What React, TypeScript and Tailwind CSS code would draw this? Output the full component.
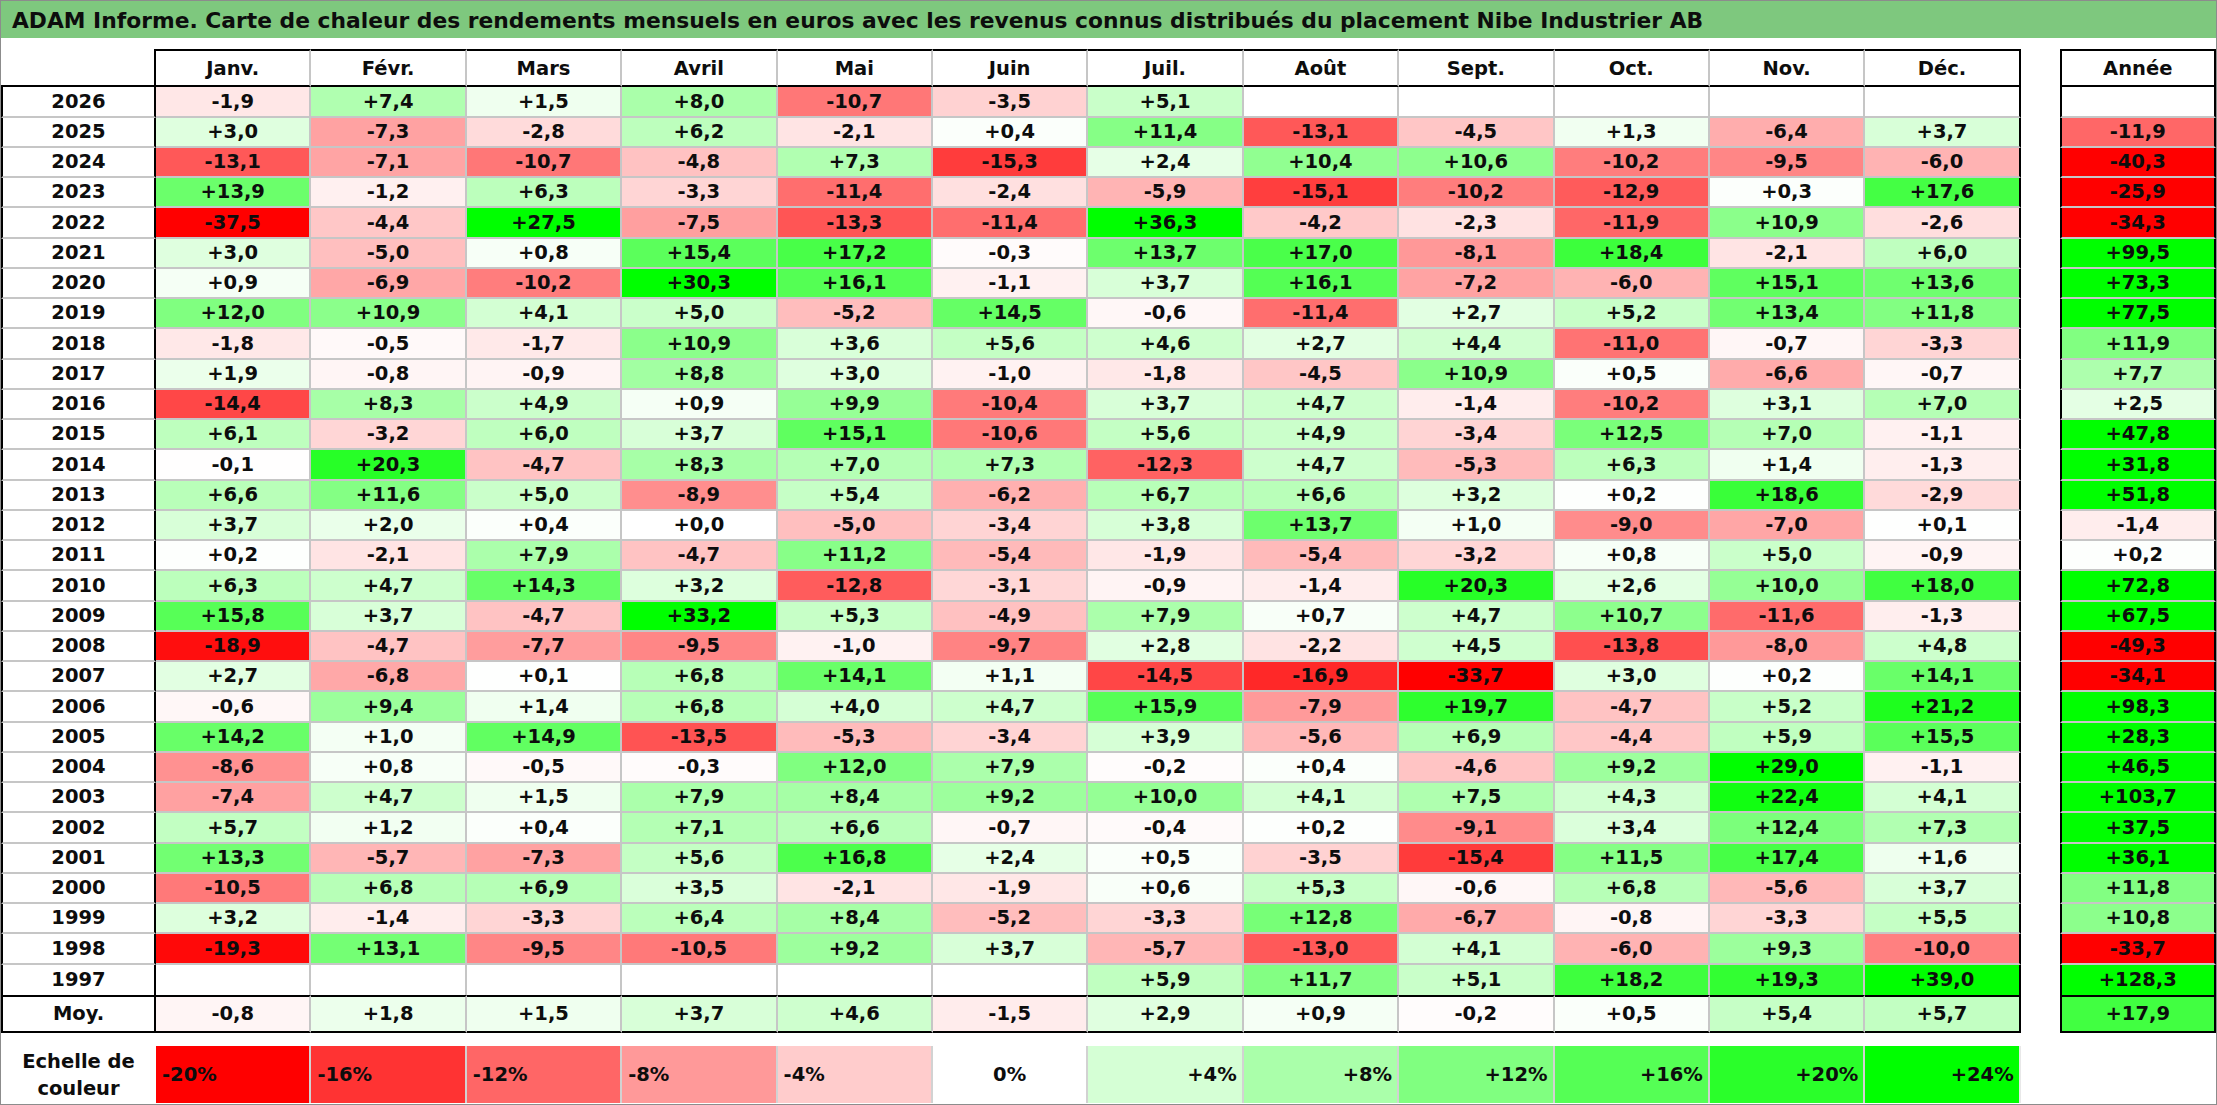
import React from "react";

const months = ["Janv.", "Févr.", "Mars", "Avril", "Mai", "Juin", "Juil.", "Août", "Sept.", "Oct.", "Nov.", "Déc."];

const raw = `2026|-1,9 +7,4 +1,5 +8,0 -10,7 -3,5 +5,1 _ _ _ _ _|_
2025|+3,0 -7,3 -2,8 +6,2 -2,1 +0,4 +11,4 -13,1 -4,5 +1,3 -6,4 +3,7|-11,9
2024|-13,1 -7,1 -10,7 -4,8 +7,3 -15,3 +2,4 +10,4 +10,6 -10,2 -9,5 -6,0|-40,3
2023|+13,9 -1,2 +6,3 -3,3 -11,4 -2,4 -5,9 -15,1 -10,2 -12,9 +0,3 +17,6|-25,9
2022|-37,5 -4,4 +27,5 -7,5 -13,3 -11,4 +36,3 -4,2 -2,3 -11,9 +10,9 -2,6|-34,3
2021|+3,0 -5,0 +0,8 +15,4 +17,2 -0,3 +13,7 +17,0 -8,1 +18,4 -2,1 +6,0|+99,5
2020|+0,9 -6,9 -10,2 +30,3 +16,1 -1,1 +3,7 +16,1 -7,2 -6,0 +15,1 +13,6|+73,3
2019|+12,0 +10,9 +4,1 +5,0 -5,2 +14,5 -0,6 -11,4 +2,7 +5,2 +13,4 +11,8|+77,5
2018|-1,8 -0,5 -1,7 +10,9 +3,6 +5,6 +4,6 +2,7 +4,4 -11,0 -0,7 -3,3|+11,9
2017|+1,9 -0,8 -0,9 +8,8 +3,0 -1,0 -1,8 -4,5 +10,9 +0,5 -6,6 -0,7|+7,7
2016|-14,4 +8,3 +4,9 +0,9 +9,9 -10,4 +3,7 +4,7 -1,4 -10,2 +3,1 +7,0|+2,5
2015|+6,1 -3,2 +6,0 +3,7 +15,1 -10,6 +5,6 +4,9 -3,4 +12,5 +7,0 -1,1|+47,8
2014|-0,1 +20,3 -4,7 +8,3 +7,0 +7,3 -12,3 +4,7 -5,3 +6,3 +1,4 -1,3|+31,8
2013|+6,6 +11,6 +5,0 -8,9 +5,4 -6,2 +6,7 +6,6 +3,2 +0,2 +18,6 -2,9|+51,8
2012|+3,7 +2,0 +0,4 +0,0 -5,0 -3,4 +3,8 +13,7 +1,0 -9,0 -7,0 +0,1|-1,4
2011|+0,2 -2,1 +7,9 -4,7 +11,2 -5,4 -1,9 -5,4 -3,2 +0,8 +5,0 -0,9|+0,2
2010|+6,3 +4,7 +14,3 +3,2 -12,8 -3,1 -0,9 -1,4 +20,3 +2,6 +10,0 +18,0|+72,8
2009|+15,8 +3,7 -4,7 +33,2 +5,3 -4,9 +7,9 +0,7 +4,7 +10,7 -11,6 -1,3|+67,5
2008|-18,9 -4,7 -7,7 -9,5 -1,0 -9,7 +2,8 -2,2 +4,5 -13,8 -8,0 +4,8|-49,3
2007|+2,7 -6,8 +0,1 +6,8 +14,1 +1,1 -14,5 -16,9 -33,7 +3,0 +0,2 +14,1|-34,1
2006|-0,6 +9,4 +1,4 +6,8 +4,0 +4,7 +15,9 -7,9 +19,7 -4,7 +5,2 +21,2|+98,3
2005|+14,2 +1,0 +14,9 -13,5 -5,3 -3,4 +3,9 -5,6 +6,9 -4,4 +5,9 +15,5|+28,3
2004|-8,6 +0,8 -0,5 -0,3 +12,0 +7,9 -0,2 +0,4 -4,6 +9,2 +29,0 -1,1|+46,5
2003|-7,4 +4,7 +1,5 +7,9 +8,4 +9,2 +10,0 +4,1 +7,5 +4,3 +22,4 +4,1|+103,7
2002|+5,7 +1,2 +0,4 +7,1 +6,6 -0,7 -0,4 +0,2 -9,1 +3,4 +12,4 +7,3|+37,5
2001|+13,3 -5,7 -7,3 +5,6 +16,8 +2,4 +0,5 -3,5 -15,4 +11,5 +17,4 +1,6|+36,1
2000|-10,5 +6,8 +6,9 +3,5 -2,1 -1,9 +0,6 +5,3 -0,6 +6,8 -5,6 +3,7|+11,8
1999|+3,2 -1,4 -3,3 +6,4 +8,4 -5,2 -3,3 +12,8 -6,7 -0,8 -3,3 +5,5|+10,8
1998|-19,3 +13,1 -9,5 -10,5 +9,2 +3,7 -5,7 -13,0 +4,1 -6,0 +9,3 -10,0|-33,7
1997|_ _ _ _ _ _ +5,9 +11,7 +5,1 +18,2 +19,3 +39,0|+128,3`;

type Row = { year: string; vals: (string | null)[]; annual: string | null };

const rows: Row[] = raw.split("\n").map((line) => {
  const [year, vals, annual] = line.split("|");
  return {
    year,
    vals: vals.split(" ").map((v) => (v === "_" ? null : v)),
    annual: annual === "_" ? null : annual,
  };
});

const avg = ["-0,8", "+1,8", "+1,5", "+3,7", "+4,6", "-1,5", "+2,9", "+0,9", "-0,2", "+0,5", "+5,4", "+5,7"];
const avgYear = "+17,9";

const scale = [
  { label: "-20%", v: -20, align: "left" },
  { label: "-16%", v: -16, align: "left" },
  { label: "-12%", v: -12, align: "left" },
  { label: "-8%", v: -8, align: "left" },
  { label: "-4%", v: -4, align: "left" },
  { label: "0%", v: 0, align: "center" },
  { label: "+4%", v: 4, align: "right" },
  { label: "+8%", v: 8, align: "right" },
  { label: "+12%", v: 12, align: "right" },
  { label: "+16%", v: 16, align: "right" },
  { label: "+20%", v: 20, align: "right" },
  { label: "+24%", v: 24, align: "right" },
];

function colorOf(v: number): string {
  if (v < 0) {
    const t = Math.min(-v / 20, 1);
    const g = Math.round(255 * (1 - t));
    return `rgb(255,${g},${g})`;
  }
  const t = Math.min(v / 24, 1);
  const r = Math.round(255 * (1 - t));
  return `rgb(${r},255,${r})`;
}

function bg(s: string | null): string {
  if (!s) return "#ffffff";
  return colorOf(parseFloat(s.replace(",", ".")));
}

export default function App() {
  return (
    <div className="w-[2217px] h-[1105px] box-border border border-[#8c8c8c] bg-white overflow-hidden font-['DejaVu_Sans',sans-serif] font-bold text-[19.5px] leading-none text-[#0d0d0d]">
      {/* Title */}
      <div className="h-[36.7px] bg-[#7ec87e] flex items-center pl-[11px] pt-[3px] text-[21.8px] whitespace-nowrap">
        ADAM Informe. Carte de chaleur des rendements mensuels en euros avec les revenus connus distribués du placement Nibe Industrier AB
      </div>

      <div className="flex items-start mt-[11.6px]">
        {/* Main table */}
        <div className="w-[2020px] flex flex-col">
          {/* Header */}
          <div className="flex h-[38px]">
            <div className="w-[155px] h-full box-border border-r-2 border-r-black border-b-2 border-b-black" />
            {months.map((m, i) => (
              <div
                key={m}
                className={`w-[155.4px] h-full box-border flex items-center justify-center border-t-2 border-t-black border-b-2 border-b-black border-r-2 ${
                  i === 11 ? "border-r-black" : "border-r-[#c6c6c6]"
                }`}
              >
                {m}
              </div>
            ))}
          </div>

          {/* Data rows */}
          {rows.map((r, ri) => {
            const last = ri === rows.length - 1;
            return (
              <div key={r.year} className="flex h-[30.26px]">
                <div
                  className={`w-[155px] h-full box-border flex items-center justify-center border-l-2 border-l-black border-r-2 border-r-black ${
                    last ? "" : "border-b-2 border-b-[#c6c6c6]"
                  }`}
                >
                  {r.year}
                </div>
                {r.vals.map((v, i) => (
                  <div
                    key={i}
                    className={`w-[155.4px] h-full box-border flex items-center justify-center border-r-2 ${
                      i === 11 ? "border-r-black" : "border-r-[#c6c6c6]"
                    } ${last ? "" : "border-b-2 border-b-[#c6c6c6]"}`}
                    style={{ backgroundColor: bg(v) }}
                  >
                    {v ?? ""}
                  </div>
                ))}
              </div>
            );
          })}

          {/* Average row */}
          <div className="flex h-[38px]">
            <div className="w-[155px] h-full box-border flex items-center justify-center border-l-2 border-l-black border-r-2 border-r-black border-t-2 border-t-black border-b-2 border-b-black">
              Moy.
            </div>
            {avg.map((v, i) => (
              <div
                key={i}
                className={`w-[155.4px] h-full box-border flex items-center justify-center border-t-2 border-t-black border-b-2 border-b-black border-r-2 ${
                  i === 11 ? "border-r-black" : "border-r-[#c6c6c6]"
                }`}
                style={{ backgroundColor: bg(v) }}
              >
                {v}
              </div>
            ))}
          </div>

          {/* Scale row */}
          <div className="flex h-[56.3px] mt-[13.6px]">
            <div className="w-[155px] h-full flex flex-col items-center justify-center leading-[27px]">
              <span>Echelle de</span>
              <span>couleur</span>
            </div>
            {scale.map((s, i) => (
              <div
                key={s.label}
                className={`w-[155.4px] h-full box-border flex items-center border-r-2 ${
                  s.align === "left"
                    ? "justify-start pl-[6px]"
                    : s.align === "right"
                    ? "justify-end pr-[5px]"
                    : "justify-center"
                } ${i === 11 ? "border-r-[#e8e8e8]" : "border-r-[#d2d2d2]"}`}
                style={{ backgroundColor: colorOf(s.v) }}
              >
                {s.label}
              </div>
            ))}
          </div>
        </div>

        {/* Year column */}
        <div className="ml-[39px] w-[155.5px] flex flex-col">
          <div className="h-[38px] box-border border-2 border-black flex items-center justify-center">Année</div>
          {rows.map((r, ri) => {
            const last = ri === rows.length - 1;
            return (
              <div
                key={r.year}
                className={`h-[30.26px] box-border flex items-center justify-center border-l-2 border-l-black border-r-2 border-r-black ${
                  last ? "" : "border-b-2 border-b-[#c6c6c6]"
                }`}
                style={{ backgroundColor: bg(r.annual) }}
              >
                {r.annual ?? ""}
              </div>
            );
          })}
          <div
            className="h-[38px] box-border border-2 border-black flex items-center justify-center"
            style={{ backgroundColor: bg(avgYear) }}
          >
            {avgYear}
          </div>
        </div>
      </div>
    </div>
  );
}
